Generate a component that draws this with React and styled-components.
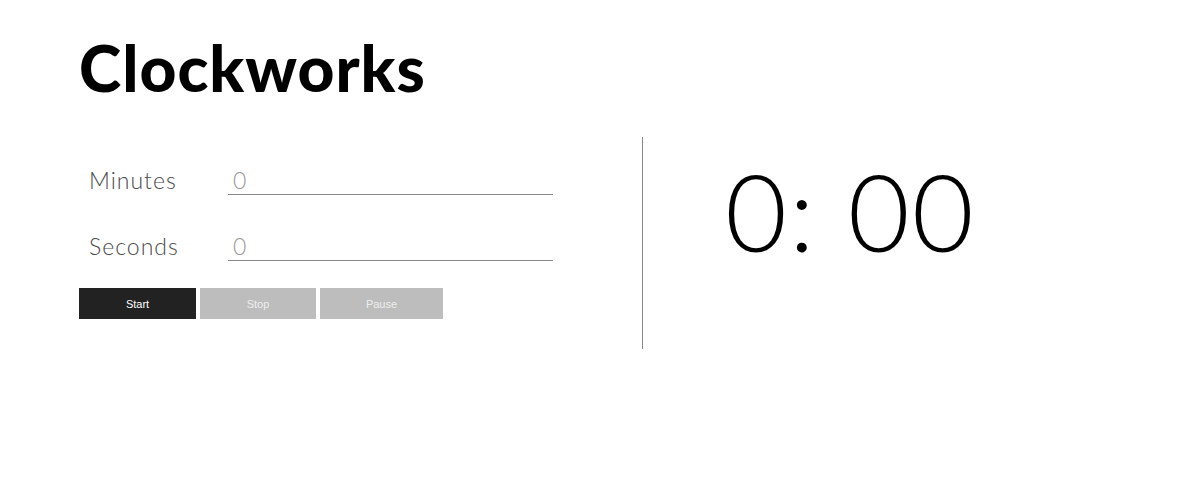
import React from "react";
import styled, { createGlobalStyle } from "styled-components";

const Global = createGlobalStyle`
  body {
    margin: 0;
    background: #fff;
    font-family: Lato, "Liberation Sans", sans-serif;
  }
`;

const Page = styled.div`
  padding: 30px 0 0 79px;
`;

const Title = styled.h1`
  margin: 0;
  font-family: Lato, sans-serif;
  font-weight: 900;
  font-size: 64px;
  line-height: 76px;
  letter-spacing: 1px;
  color: #000;
`;

const Main = styled.div`
  display: flex;
  margin-top: 31px;
`;

const Controls = styled.div`
  width: 563px;
  padding-top: 28px;
`;

const Field = styled.div`
  display: flex;
  align-items: flex-end;
  margin-bottom: ${(p) => p.$gap}px;
`;

const Label = styled.label`
  width: 149px;
  padding-left: 10px;
  box-sizing: border-box;
  font-family: Lato, sans-serif;
  font-weight: 300;
  font-size: 23px;
  line-height: 30px;
  letter-spacing: 1px;
  color: #4a4a4a;
`;

const Input = styled.input`
  width: 325px;
  height: 30px;
  box-sizing: border-box;
  border: none;
  border-bottom: 1px solid #888;
  padding: 0 5px;
  font-family: Lato, sans-serif;
  font-weight: 300;
  font-size: 23px;
  color: #999;
  outline: none;
  background: transparent;
`;

const Buttons = styled.div`
  display: flex;
  gap: 4px;
`;

const Button = styled.button`
  width: ${(p) => p.$w}px;
  height: 31px;
  border: none;
  padding: 0;
  background: ${(p) => (p.$primary ? "#222" : "#bdbdbd")};
  color: ${(p) => (p.$primary ? "#fff" : "#eee")};
  font-family: "Liberation Sans", sans-serif;
  font-size: 11px;
  cursor: pointer;
`;

const Display = styled.div`
  border-left: 1px solid #888;
  height: 212px;
  padding-left: 82px;
`;

const Clock = styled.div`
  font-family: Lato, sans-serif;
  font-weight: 300;
  font-size: 107px;
  line-height: 107px;
  letter-spacing: 2px;
  margin-top: 20px;
  color: #000;
`;

export default function App() {
  return (
    <Page>
      <Global />
      <Title>Clockworks</Title>
      <Main>
        <Controls>
          <Field $gap={36}>
            <Label>Minutes</Label>
            <Input defaultValue="0" />
          </Field>
          <Field $gap={27}>
            <Label>Seconds</Label>
            <Input defaultValue="0" />
          </Field>
          <Buttons>
            <Button $primary $w={117}>Start</Button>
            <Button $w={116}>Stop</Button>
            <Button $w={123}>Pause</Button>
          </Buttons>
        </Controls>
        <Display>
          <Clock>0: 00</Clock>
        </Display>
      </Main>
    </Page>
  );
}
